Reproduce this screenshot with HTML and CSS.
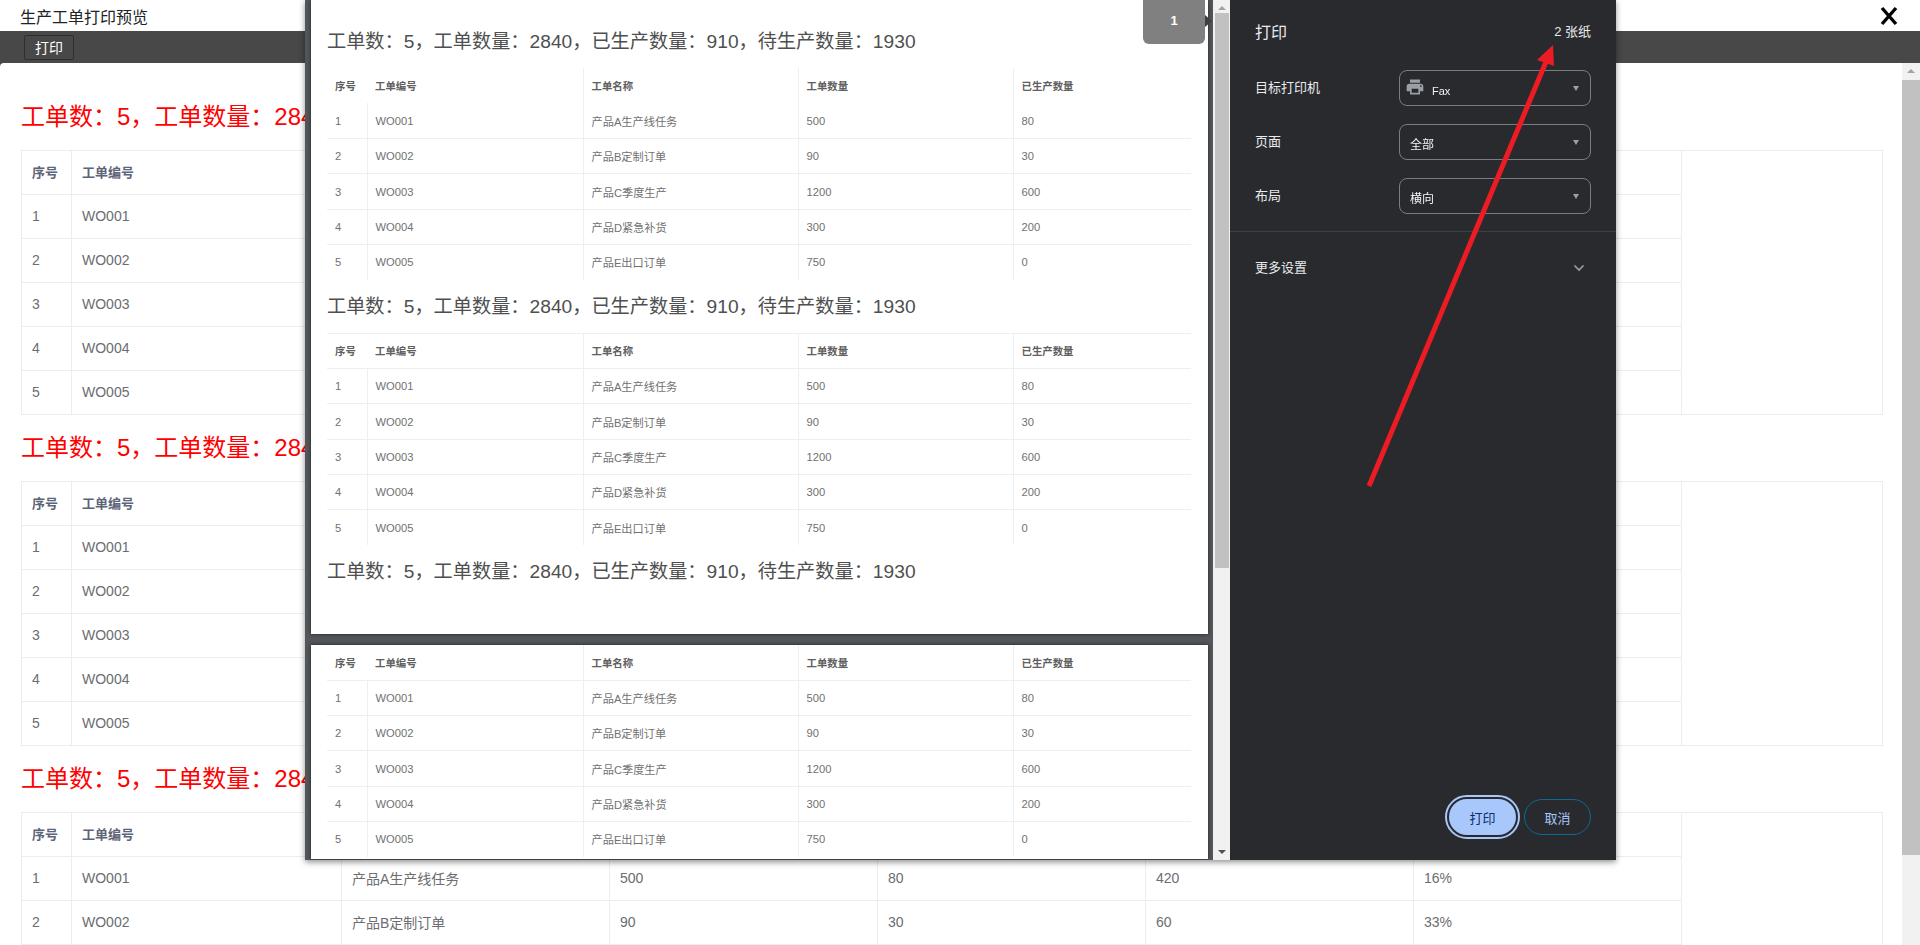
FILE: index.html
```html
<!DOCTYPE html>
<html lang="zh-CN">
<head>
    <meta charset="UTF-8">
    <title>生产工单打印预览</title>
    <link rel="stylesheet" href="styles.css">
</head>
<body>
    <header class="title-bar">
        <span class="title-text">生产工单打印预览</span>
        <svg class="close-icon" width="20" height="20" viewBox="0 0 20 20"><path d="M3 2 L17 18 M17 2 L3 18" stroke="#000" stroke-width="3.4" fill="none"/></svg>
    </header>
    <div class="main-area">
        <div class="toolbar">
            <button class="toolbar-button">打印</button>
        </div>
        <div class="content-row">
            <div class="content" id="content"></div>
            <div class="page-scrollbar">
                <div class="scroll-arrow-up"></div>
                <div class="page-scrollbar-thumb"></div>
            </div>
        </div>
    </div>

    <div class="print-dialog">
        <div class="preview-pane">
            <div class="sheet sheet-first" id="sheet-first"></div>
            <div class="sheet sheet-second" id="sheet-second"></div>
            <div class="page-tab">1</div>
        </div>
        <div class="preview-scrollbar">
            <div class="scroll-arrow-up"></div>
            <div class="preview-scrollbar-thumb"></div>
            <div class="scroll-arrow-down"></div>
        </div>
        <aside class="settings">
            <div class="settings-head">
                <span class="settings-title">打印</span>
                <span class="settings-count">2 张纸</span>
            </div>
            <div class="setting-row">
                <span class="setting-label">目标打印机</span>
                <div class="select-box">
                    <svg class="printer-icon" width="20" height="20" viewBox="0 0 24 24"><path fill="#9aa0a6" d="M19 8H5c-1.66 0-3 1.34-3 3v6h4v4h12v-4h4v-6c0-1.66-1.34-3-3-3zm-3 11H8v-5h8v5zm3-7c-.55 0-1-.45-1-1s.45-1 1-1 1 .45 1 1-.45 1-1 1zm-1-9H6v4h12V3z"/></svg>
                    <span class="select-text select-text-fax">Fax</span>
                    <span class="select-caret"></span>
                </div>
            </div>
            <div class="setting-row">
                <span class="setting-label">页面</span>
                <div class="select-box">
                    <span class="select-text">全部</span>
                    <span class="select-caret"></span>
                </div>
            </div>
            <div class="setting-row">
                <span class="setting-label">布局</span>
                <div class="select-box">
                    <span class="select-text">横向</span>
                    <span class="select-caret"></span>
                </div>
            </div>
            <div class="more-settings">
                <span class="setting-label">更多设置</span>
                <svg width="12" height="8" viewBox="0 0 12 8"><path d="M1.5 1.5 L6 6 L10.5 1.5" stroke="#9aa0a6" stroke-width="1.6" fill="none"/></svg>
            </div>
            <div class="settings-actions">
                <button class="btn-print">打印</button>
                <button class="btn-cancel">取消</button>
            </div>
        </aside>
    </div>

    <!-- annotation arrow drawn over the dialog -->
    <svg class="annotation" width="1920" height="945" viewBox="0 0 1920 945">
        <path d="M1369 486 L1548 57" stroke="#ed1c24" stroke-width="5" fill="none"/>
        <polygon points="1553,45 1537,60 1554,66" fill="#ed1c24"/>
    </svg>

    <script src="script.js"></script>
</body>
</html>
```

FILE: styles.css
```css
* {
    box-sizing: border-box;
}
body {
    margin: 0;
    height: 100vh;
    overflow: hidden;
    display: flex;
    flex-direction: column;
    font-family: "Liberation Sans", "Noto Sans CJK SC", sans-serif;
    background-color: #fff;
    color: #6b6d71;
}
.title-bar {
    height: 31px;
    flex: none;
    display: flex;
    align-items: center;
    justify-content: space-between;
    padding: 0 21px 0 20px;
    background-color: #fff;
}
.title-text {
    font-size: 16px;
    color: #222;
}
.main-area {
    flex: 1;
    min-height: 0;
    display: flex;
    flex-direction: column;
    background-color: #484848;
}
.toolbar {
    height: 32px;
    flex: none;
    display: flex;
    align-items: center;
    padding: 0 24px;
}
.toolbar-button {
    width: 50px;
    height: 25px;
    padding: 0;
    font-family: inherit;
    font-size: 14px;
    color: #fff;
    background-color: #484848;
    border: 1px solid #2e2e2e;
    border-radius: 2px;
}
.content-row {
    flex: 1;
    min-height: 0;
    display: flex;
    background-color: #fff;
    border-radius: 4px 4px 0 0;
}
.content {
    flex: 1;
    min-width: 0;
    overflow: hidden;
    padding: 21px 20px 0 21px;
}
.report-heading {
    height: 66px;
    margin: 0;
    font-size: 24px;
    font-weight: normal;
    line-height: 65px;
    white-space: nowrap;
    color: #f00;
}
.report-table {
    width: 1861px;
    table-layout: fixed;
    border-collapse: collapse;
    font-size: 14px;
}
.report-table th,
.report-table td {
    height: 44px;
    padding: 0 10px 2px;
    text-align: left;
    border: 1px solid #ebedf3;
}
.report-table th {
    font-size: 13px;
    color: #5c6478;
    font-weight: bold;
}
.page-scrollbar {
    width: 18px;
    flex: none;
    position: relative;
    background-color: #f1f1f1;
    padding-top: 17px;
}
.page-scrollbar-thumb {
    height: 775px;
    background-color: #c1c1c1;
}
.scroll-arrow-up,
.scroll-arrow-down {
    position: absolute;
    left: 5px;
    width: 0;
    height: 0;
    border-left: 4px solid transparent;
    border-right: 4px solid transparent;
}
.scroll-arrow-up {
    top: 6px;
    border-bottom: 4px solid #a3a3a3;
}
.scroll-arrow-down {
    bottom: 6px;
    border-top: 4px solid #505050;
}

/* print dialog */
.print-dialog {
    position: fixed;
    top: 0;
    left: 305px;
    width: 1311px;
    height: 860px;
    display: flex;
    box-shadow: 0 2px 6px rgba(0, 0, 0, 0.45);
}
.preview-pane {
    width: 908px;
    flex: none;
    position: relative;
    overflow: hidden;
    padding: 0 5px 0 6px;
    background-color: #53565b;
}
.sheet {
    background-color: #fff;
    padding: 0 17px 0 16px;
    overflow: hidden;
    box-shadow: 0 0 4px rgba(0, 0, 0, 0.6);
}
.sheet-first {
    height: 634px;
    padding-top: 15px;
    margin-bottom: 11px;
}
.sheet-second {
    height: 214px;
}
.sheet-heading {
    height: 53px;
    margin: 0;
    font-size: 19.2px;
    font-weight: normal;
    line-height: 53px;
    white-space: nowrap;
    color: #4f4f4f;
}
.sheet-table {
    width: 864px;
    table-layout: fixed;
    border-collapse: collapse;
    font-size: 11.2px;
    color: #717171;
}
.sheet-table th,
.sheet-table td {
    height: 35.3px;
    padding: 0 8px;
    text-align: left;
    border-bottom: 1px solid #eeeff2;
    border-right: 1px solid #eeeff2;
}
.sheet-table th {
    font-size: 10.4px;
    color: #606060;
    font-weight: bold;
}
.sheet-table tr:last-child td {
    border-bottom: none;
}
.sheet-table th:first-child,
.sheet-table th:last-child,
.sheet-table td:last-child {
    border-right: none;
}
.sheet-table.with-top {
    border-top: 1px solid #eeeff2;
}
.sheet-table.no-head-line th {
    border-bottom: none;
}
.page-tab {
    position: absolute;
    top: 0;
    left: 838px;
    width: 62px;
    height: 44px;
    padding-top: 13px;
    text-align: center;
    font-size: 13px;
    font-weight: bold;
    color: #fff;
    background-color: #808080;
    border-radius: 0 0 6px 6px;
}
.page-tab::after {
    content: "";
    position: absolute;
    top: 15px;
    right: -7px;
    border-top: 6px solid transparent;
    border-bottom: 6px solid transparent;
    border-left: 7px solid #3d3f42;
}
.preview-scrollbar {
    width: 17px;
    flex: none;
    position: relative;
    background-color: #f1f1f1;
    padding: 13px 1px 0 2px;
}
.preview-scrollbar .scroll-arrow-up,
.preview-scrollbar .scroll-arrow-down {
    left: 5px;
}
.preview-scrollbar-thumb {
    height: 555px;
    background-color: #c1c1c1;
}
.settings {
    flex: 1;
    display: flex;
    flex-direction: column;
    background-color: #292a2d;
    color: #e8eaed;
    font-size: 13px;
}
.settings-head {
    height: 70px;
    flex: none;
    display: flex;
    align-items: flex-start;
    justify-content: space-between;
    padding: 21px 25px 0 25px;
    line-height: 22px;
}
.settings-title {
    font-size: 16px;
    margin-top: 1px;
}
.setting-row {
    height: 54px;
    flex: none;
    display: flex;
    justify-content: space-between;
    padding: 0 25px;
}
.setting-label {
    line-height: 36px;
}
.select-box {
    width: 192px;
    height: 36px;
    display: flex;
    align-items: center;
    gap: 7px;
    position: relative;
    padding: 2px 10px 0 10px;
    font-size: 12px;
    border: 1px solid #7a7d82;
    border-radius: 8px;
}
.printer-icon {
    margin: -4px 0 0 -5px;
}
.select-text {
    color: #f1f3f4;
}
.select-text-fax {
    margin-top: 3px;
    font-size: 11px;
}
.select-caret {
    position: absolute;
    right: 11px;
    top: 15px;
    border-left: 3.5px solid transparent;
    border-right: 3.5px solid transparent;
    border-top: 5px solid #9aa0a6;
}
.more-settings {
    flex: none;
    height: 73px;
    margin-top: -1px;
    display: flex;
    align-items: center;
    justify-content: space-between;
    padding: 0 31px 0 25px;
    border-top: 1px solid #3f4043;
}
.settings-actions {
    margin-top: auto;
    margin-bottom: 25px;
    display: flex;
    justify-content: flex-end;
    gap: 8px;
    padding-right: 25px;
}
.btn-print,
.btn-cancel {
    width: 67px;
    height: 36px;
    padding: 0;
    font-family: inherit;
    font-size: 13px;
    border-radius: 18px;
}
.btn-print {
    color: #062e6f;
    background-color: #a8c7fa;
    border: none;
    outline: 2px solid #a8c7fa;
    outline-offset: 2px;
}
.btn-cancel {
    color: #a8c7fa;
    background-color: transparent;
    border: 1px solid #0b6a9a;
}
.annotation {
    position: fixed;
    top: 0;
    left: 0;
    pointer-events: none;
}
```

FILE: script.js
```js
const headers = ['序号', '工单编号', '工单名称', '工单数量', '已生产数量', '待生产数量', '完成率'];
const orders = [
    ['1', 'WO001', '产品A生产线任务', '500', '80', '420', '16%'],
    ['2', 'WO002', '产品B定制订单', '90', '30', '60', '33%'],
    ['3', 'WO003', '产品C季度生产', '1200', '600', '600', '50%'],
    ['4', 'WO004', '产品D紧急补货', '300', '200', '100', '67%'],
    ['5', 'WO005', '产品E出口订单', '750', '0', '750', '0%']
];
const summary = '工单数：5，工单数量：2840，已生产数量：910，待生产数量：1930';

function cells(tag, values) {
    return values.map(value => `<${tag}>${value}</${tag}>`).join('');
}

function colgroup(widths) {
    return '<colgroup>' + widths.map(w => `<col style="width:${w}px">`).join('') + '</colgroup>';
}

function reportBlock() {
    const rows = orders.map(row => `<tr>${cells('td', row)}</tr>`).join('');
    return `
        <h2 class="report-heading">${summary}</h2>
        <table class="report-table">
            ${colgroup([50, 270, 268, 268, 268, 268, 268, 201])}
            <tr>${cells('th', headers)}<td rowspan="6"></td></tr>
            ${rows}
        </table>`;
}

function sheetTable(extraClass) {
    const rows = orders.map(row => `<tr>${cells('td', row.slice(0, 5))}</tr>`).join('');
    return `
        <table class="sheet-table ${extraClass}">
            ${colgroup([40, 216, 215, 215, 178])}
            <tr>${cells('th', headers.slice(0, 5))}</tr>
            ${rows}
        </table>`;
}

function sheetHeading() {
    return `<h2 class="sheet-heading">${summary}</h2>`;
}

document.getElementById('content').innerHTML = reportBlock() + reportBlock() + reportBlock();
document.getElementById('sheet-first').innerHTML =
    sheetHeading() + sheetTable('no-head-line') +
    sheetHeading() + sheetTable('with-top') +
    sheetHeading();
document.getElementById('sheet-second').innerHTML = sheetTable('');
```
